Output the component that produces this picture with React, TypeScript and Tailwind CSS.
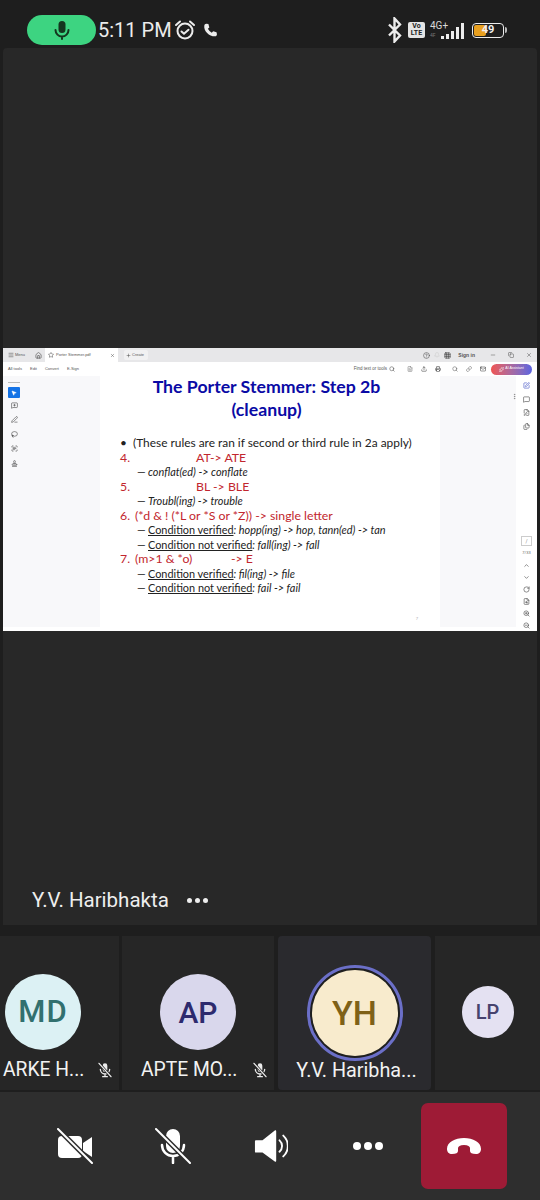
import { Menu, Home, Star, X, Plus, HelpCircle, Bell, Grid3x3, Minus, Copy, Search, FileText, Upload, Printer, Mail, Link, Sparkles, MousePointer2, MessageSquarePlus, PenLine, Lasso, ScanText, Stamp, SquarePen, MessageSquare, FilePen, Files, ChevronUp, ChevronDown, RotateCw, FileSearch, ZoomIn, ZoomOut, MoreVertical } from 'lucide-react';

function AlarmIcon() {
  return (
    <svg width="22" height="22" viewBox="0 0 22 22" fill="none" stroke="#ececec" strokeWidth="2" strokeLinecap="round">
      <circle cx="11" cy="12" r="7.5" />
      <path d="M7.5 12.5l2.5 2.2 4.5-4" />
      <path d="M2 6l4-3.5M20 6l-4-3.5" />
    </svg>
  );
}

function MutedMic({ size = 16 }: { size?: number }) {
  return (
    <svg width={size} height={size} viewBox="0 0 24 24" fill="none" stroke="#ececec" strokeWidth="2" strokeLinecap="round">
      <rect x="8.5" y="2" width="7" height="13" rx="3.5" fill="#ececec" stroke="none" />
      <path d="M5 11a7 7 0 0 0 14 0M12 18v4M8.5 22h7" />
      <path d="M3 2l18 20" stroke="#262626" strokeWidth="4" />
      <path d="M3 2l18 20" />
    </svg>
  );
}

function StatusBar() {
  return (
    <div className="h-12 flex items-center pl-[27px] pr-[33px] pt-[12px] text-[#ececec]">
      <div className="w-[69px] h-[30px] rounded-full bg-[#3dd481] flex items-center justify-center">
        <svg width="18" height="20" viewBox="0 0 18 20" fill="none" stroke="#14361f" strokeWidth="2" strokeLinecap="round">
          <rect x="5.5" y="1" width="7" height="12" rx="3.5" fill="#14361f" stroke="none" />
          <path d="M2.5 10a6.5 6.5 0 0 0 13 0M9 16.5V19" />
        </svg>
      </div>
      <span className="ml-[2px] text-[20px] leading-none font-['Roboto',sans-serif]">5:11 PM</span>
      <div className="ml-[2px]"><AlarmIcon /></div>
      <svg className="ml-[6px]" width="16" height="16" viewBox="0 0 24 24" fill="#ececec">
        <path d="M6.6 2.5l3 .6 1.4 5-2.2 2.2a14 14 0 0 0 5.8 5.8l2.2-2.2 5 1.4.6 3c.1 1.600-1.200 3.200-3 3.200C10.500 21.500 2.500 13.500 3.400 5.500c.2-1.800 1.600-3.100 3.200-3z" />
      </svg>
      <div className="ml-auto flex items-center">
        <svg width="14" height="26" viewBox="0 0 14 26" fill="none" stroke="#ececec" strokeWidth="2.400">
          <path d="M1 7.500l11 11-5.500 6V1.500l5.500 6-11 11" />
        </svg>
        <div className="ml-[6px] w-[17px] h-[16px] rounded-[2px] bg-[#e4e4e4] text-[#222] text-[7px] leading-[7px] font-bold text-center font-['Roboto',sans-serif] flex flex-col justify-center">
          <span>Vo</span>
          <span>LTE</span>
        </div>
        <div className="ml-[5px] w-[19px] h-[20px] flex flex-col font-['Roboto',sans-serif]">
          <span className="text-[10px] leading-[11px] text-[#d8d8d8]">4G+</span>
          <span className="text-[5px] leading-[8px] text-[#777]">4F</span>
        </div>
        <div className="flex items-end gap-[2px] h-[16px] -ml-[8px] mt-[1px]">
          <div className="w-[3px] h-[3px] bg-[#ececec]" />
          <div className="w-[3px] h-[5px] bg-[#ececec]" />
          <div className="w-[3px] h-[8px] bg-[#ececec]" />
          <div className="w-[3px] h-[12px] bg-[#ececec]" />
          <div className="w-[3px] h-[16px] bg-[#ececec]" />
        </div>
        <div className="ml-[8px] w-[32px] h-[15px] rounded-[4px] border border-[#ececec] p-[1px] flex items-center relative">
          <div className="w-[12px] h-full rounded-[2px] bg-[#e8a020]" />
          <span className="absolute inset-0 flex items-center justify-center text-[11px] font-bold text-[#f0f0f0] font-['Roboto',sans-serif]">49</span>
        </div>
        <div className="w-[2px] h-[6px] ml-[1px] bg-[#bbb] rounded-r-sm" />
      </div>
    </div>
  );
}

function PdfChrome() {
  const text = "text-[4px] text-[#555] leading-none";
  return (
    <>
      <div className="h-[14px] shrink-0 bg-[#e7e7e9] flex items-center pl-[5px] pr-[5px] font-['Liberation_Sans',sans-serif]">
        <Menu size={6} className="text-[#444]" />
        <span className={`${text} ml-[1px]`}>Menu</span>
        <Home size={7} className="text-[#444] ml-[10px]" />
        <div className="ml-[3px] w-[73px] h-full bg-white flex items-center px-[3px]">
          <Star size={6} className="text-[#444]" />
          <span className={`${text} ml-[2px]`}>Porter Stemmer.pdf</span>
          <X size={5} className="text-[#444] ml-auto" />
        </div>
        <div className="ml-[6px] h-[10px] w-[24px] rounded-[2px] bg-[#f1f1f2] flex items-center px-[2px]">
          <Plus size={5} className="text-[#333]" />
          <span className={`${text} ml-[1px]`}>Create</span>
        </div>
        <div className="ml-auto flex items-center">
          <HelpCircle size={7} className="text-[#555]" />
          <Bell size={6} className="text-[#ccc] ml-[4px]" />
          <Grid3x3 size={7} className="text-[#333] ml-[4px]" />
          <span className="text-[5px] font-bold text-[#555] leading-none ml-[7px]">Sign in</span>
          <Minus size={6} className="text-[#555] ml-[15px]" />
          <Copy size={6} className="text-[#555] ml-[12px]" />
          <X size={6} className="text-[#555] ml-[12px]" />
        </div>
      </div>
      <div className="h-[14px] shrink-0 bg-white flex items-center pl-[5px] pr-[5px] font-['Liberation_Sans',sans-serif]">
        <span className={text}>All tools</span>
        <span className={`${text} ml-[8px]`}>Edit</span>
        <span className={`${text} ml-[8px]`}>Convert</span>
        <span className={`${text} ml-[8px]`}>E-Sign</span>
        <div className="ml-auto flex items-center">
          <span className="text-[4.500px] text-[#555] leading-none">Find text or tools</span>
          <Search size={6} className="text-[#444] ml-[2px]" />
          <FileText size={6} className="text-[#777] ml-[12px]" />
          <Upload size={6} className="text-[#333] ml-[8px]" />
          <Printer size={6} className="text-[#333] ml-[8px]" />
          <Search size={6} className="text-[#555] ml-[11px]" />
          <Link size={6} className="text-[#555] ml-[8px]" />
          <Mail size={6} className="text-[#333] ml-[8px]" />
          <div className="ml-[5px] w-[41px] h-[11px] rounded-full bg-linear-to-r from-[#ef5350] to-[#5b63e0] flex items-center justify-center gap-[1px]">
            <Sparkles size={5} className="text-white" />
            <span className="text-[3.500px] text-white leading-none">AI Assistant</span>
          </div>
        </div>
      </div>
    </>
  );
}

function LeftTools() {
  const tools = [MessageSquarePlus, PenLine, Lasso, ScanText, Stamp];
  return (
    <div className="w-[97px] bg-[#f8f8fa] pl-[5px] pt-[6px] flex flex-col">
      <div className="w-[12px] h-px bg-[#bbb] mb-[4px]" />
      <div className="w-[12px] h-[11px] rounded-[1px] bg-[#1473e6] flex items-center justify-center">
        <MousePointer2 size={6} className="text-white" fill="#fff" />
      </div>
      {tools.map((Icon, i) => (
        <div key={i} className="w-[12px] h-[14.500px] flex items-center justify-center text-[#444]">
          <Icon size={7} />
        </div>
      ))}
    </div>
  );
}

function Red({ children }: { children: React.ReactNode }) {
  return <div className="h-[14.500px] flex text-[#c2262e] text-[12.300px] leading-[14.500px] whitespace-pre">{children}</div>;
}

function Sub({ children }: { children: React.ReactNode }) {
  return (
    <div className="h-[14.500px] flex text-[#222] text-[10.900px] whitespace-pre pl-[17px]">
      <span className="w-[11px]">—</span>
      <span>{children}</span>
    </div>
  );
}

function Slide() {
  return (
    <div className="w-[340px] bg-white font-['Lato',sans-serif] leading-[14.500px] relative">
      <div className="-mt-[1px] text-center text-[#0a0aa5] font-bold text-[17.700px] leading-[23px] pr-[7px]">
        <div>The Porter Stemmer: Step 2b</div>
        <div>(cleanup)</div>
      </div>
      <div className="mt-[15px] pl-[20px]">
        <div className="h-[14.500px] flex text-[#222] text-[11.900px] whitespace-pre">
          <span className="w-[13px]">•</span>
          <span>(These rules are ran if second or third rule in 2a apply)</span>
        </div>
        <Red><span className="w-[76px]">4.</span><span>AT-&gt; ATE</span></Red>
        <Sub><i>conflat(ed) -&gt; conflate</i></Sub>
        <Red><span className="w-[76px]">5.</span><span>BL -&gt; BLE</span></Red>
        <Sub><i>Troubl(ing) -&gt; trouble</i></Sub>
        <Red><span className="w-[15px]">6.</span><span>(*d &amp; ! (*L or *S or *Z)) -&gt; single letter</span></Red>
        <Sub><u>Condition verified</u><i>: hopp(ing) -&gt; hop, tann(ed) -&gt; tan</i></Sub>
        <Sub><u>Condition not verified</u><i>: fall(ing) -&gt; fall</i></Sub>
        <Red><span className="w-[15px]">7.</span><span className="w-[96px]">(m&gt;1 &amp; *o)</span><span>-&gt; E</span></Red>
        <Sub><u>Condition verified</u><i>: fil(ing) -&gt; file</i></Sub>
        <Sub><u>Condition not verified</u><i>: fail -&gt; fail</i></Sub>
      </div>
      <span className="absolute right-[22px] bottom-[6px] text-[4px] leading-none text-[#aaa]">7</span>
    </div>
  );
}

function RightTools() {
  const top = [SquarePen, MessageSquare, FilePen, Files];
  const bottom = [ChevronUp, ChevronDown, RotateCw, FileSearch, ZoomIn, ZoomOut];
  return (
    <div className="flex-1 flex">
      <div className="w-[78px] bg-[#f8f8fa] flex justify-end pt-[17px] -mr-[2px]">
        <MoreVertical size={7} className="text-[#777]" />
      </div>
      <div className="flex-1 bg-white flex flex-col items-center pt-[3px]">
        {top.map((Icon, i) => (
          <div key={i} className={`h-[13.500px] shrink-0 flex items-center ${i === 0 ? 'text-[#3f51c5]' : 'text-[#444]'}`}>
            <Icon size={7} />
          </div>
        ))}
        <div className="mt-[103px] w-[11px] h-[10px] shrink-0 border border-[#ccc] text-[5px] leading-[8px] text-center text-[#888]">/</div>
        <span className="mt-[4px] h-[6px] shrink-0 text-[4px] leading-[6px] text-[#666]">7/33</span>
        <div className="mt-[3px] flex flex-col items-center shrink-0">
          {bottom.map((Icon, i) => (
            <div key={i} className="h-[12px] shrink-0 flex items-center text-[#444]">
              <Icon size={7} />
            </div>
          ))}
        </div>
      </div>
    </div>
  );
}

function Tile({ initials, name, muted, avatar, text, size, className = '' }: {
  initials: string; name: string; muted?: boolean; avatar: string; text: string; size: string; className?: string;
}) {
  return (
    <div className="relative flex flex-col items-center pt-[38px] h-[153px]">
      <div className={`w-[76px] h-[76px] rounded-full flex items-center justify-center ${avatar} ${size}`}>
        <span className={`font-['Roboto',sans-serif] font-medium ${text}`}>{initials}</span>
      </div>
      <div className={`mt-[8px] w-full h-[24px] leading-[24px] text-[19.300px] text-[#f2f2f2] font-['Roboto',sans-serif] whitespace-nowrap ${className}`}>
        {name}
      </div>
      {muted && <span className="absolute right-[6px] bottom-[11px]"><MutedMic /></span>}
    </div>
  );
}

export default function App() {
  return (
    <div className="w-[540px] h-[1200px] bg-[#1e1e1e] flex flex-col overflow-hidden font-['Roboto',sans-serif]">
      <StatusBar />
      <div className="h-[877px] bg-[#282828] mx-[3px] rounded-t-[4px] pt-[300px]">
        <div className="h-[283px] flex flex-col">
          <PdfChrome />
          <div className="flex-1 min-h-0 flex border-b-[4px] border-white">
            <LeftTools />
            <Slide />
            <RightTools />
          </div>
        </div>
        <div className="mt-[257px] pl-[29px] flex items-center text-[20.500px] leading-[24px] text-[#eeeeee]">
          <span>Y.V. Haribhakta</span>
          <div className="ml-[18px] flex gap-[3px]">
            <div className="w-[5px] h-[5px] rounded-full bg-[#eeeeee]" />
            <div className="w-[5px] h-[5px] rounded-full bg-[#eeeeee]" />
            <div className="w-[5px] h-[5px] rounded-full bg-[#eeeeee]" />
          </div>
        </div>
      </div>
      <div className="mt-[11px] flex gap-[3px] h-[154px] overflow-hidden">
        <div className="w-[119px] shrink-0 bg-[#262626]">
          <Tile initials="MD" name="ARKE H..." muted avatar="bg-[#dcf1f4]" text="text-[#32706f] text-[31px] tracking-[1px]" size="-ml-[33px]" className="pl-[3px]" />
        </div>
        <div className="w-[152px] shrink-0 bg-[#262626]">
          <Tile initials="AP" name="APTE MO..." muted avatar="bg-[#d9d7ec]" text="text-[#2d2a6e] text-[30px]" size="" className="pl-[19px]" />
        </div>
        <div className="w-[153px] shrink-0 ml-[1px] bg-[#2a2a2e] rounded-[4px] relative flex flex-col items-center">
          <div className="mt-[29px] w-[96px] h-[96px] rounded-full border-[3px] border-[#6b6fc8] p-[2px] bg-[#1f1f1f]">
            <div className="w-full h-full rounded-full bg-[#f8ebcd] flex items-center justify-center text-[34px] font-medium text-[#7f6117]">YH</div>
          </div>
          <div className="-mt-[2px] pl-[4px] text-[19.800px] leading-[24px] text-[#f2f2f2] whitespace-nowrap">Y.V. Haribha...</div>
        </div>
        <div className="flex-1 ml-[1px] bg-[#262626] flex justify-center pt-[50px]">
          <div className="w-[52px] h-[52px] rounded-full bg-[#e4e1f2] text-[#46426e] flex items-center justify-center text-[20px] font-medium">LP</div>
        </div>
      </div>
      <div className="mt-[2px] flex-1 bg-[#2e2e2e] flex items-center pl-[26px]">
        <div className="w-[98px] flex justify-center">
          <svg width="36" height="36" viewBox="0 0 36 36">
            <rect x="1" y="8" width="24" height="22" rx="4" fill="#fff" />
            <path d="M26 15l9-6v20l-9-6z" fill="#fff" />
            <path d="M2 2l33 33" stroke="#2e2e2e" strokeWidth="5" />
            <path d="M1 1l34 34" stroke="#fff" strokeWidth="2" strokeLinecap="round" />
          </svg>
        </div>
        <div className="w-[98px] flex justify-center">
          <svg width="36" height="36" viewBox="0 0 36 36" fill="none" stroke="#fff" strokeWidth="2.500" strokeLinecap="round">
            <rect x="11" y="1" width="14" height="24" rx="7" fill="#fff" stroke="none" />
            <path d="M7 17a11 11 0 0 0 22 0M18 28v7" />
            <path d="M2 2l33 33" stroke="#2e2e2e" strokeWidth="5" />
            <path d="M1 1l34 34" strokeWidth="2" />
          </svg>
        </div>
        <div className="w-[98px] flex justify-center">
          <svg width="34" height="36" viewBox="0 0 36 36" fill="none">
            <path d="M2 12h7L22 1.500c.8-.5 1.500 0 1.500 1v31c0 1-.7 1.500-1.500 1L9 25H2a1 1 0 0 1-1-1V13a1 1 0 0 1 1-1z" fill="#fff" />
            <path d="M27 12a8 8 0 0 1 0 12M31 7a15 15 0 0 1 0 22" stroke="#fff" strokeWidth="2" strokeLinecap="round" />
          </svg>
        </div>
        <div className="w-[96px] flex justify-center gap-[3px]">
          <div className="w-[8px] h-[8px] rounded-full bg-white" />
          <div className="w-[8px] h-[8px] rounded-full bg-white" />
          <div className="w-[8px] h-[8px] rounded-full bg-white" />
        </div>
        <div className="ml-[5px] w-[86px] h-[86px] rounded-[7px] bg-[#9e1b36] flex items-center justify-center">
          <svg width="36" height="18" viewBox="0 0 36 18" fill="#fff">
            <path d="M1 12C1 5 9 1 18 1s17 4 17 11c0 3-2 5-5 5-4 0-6-1-6-3v-3c0-1.500-2-3-6-3s-6 1.500-6 3v3c0 2-2 3-6 3-3 0-5-2-5-5z" />
          </svg>
        </div>
      </div>
    </div>
  );
}
